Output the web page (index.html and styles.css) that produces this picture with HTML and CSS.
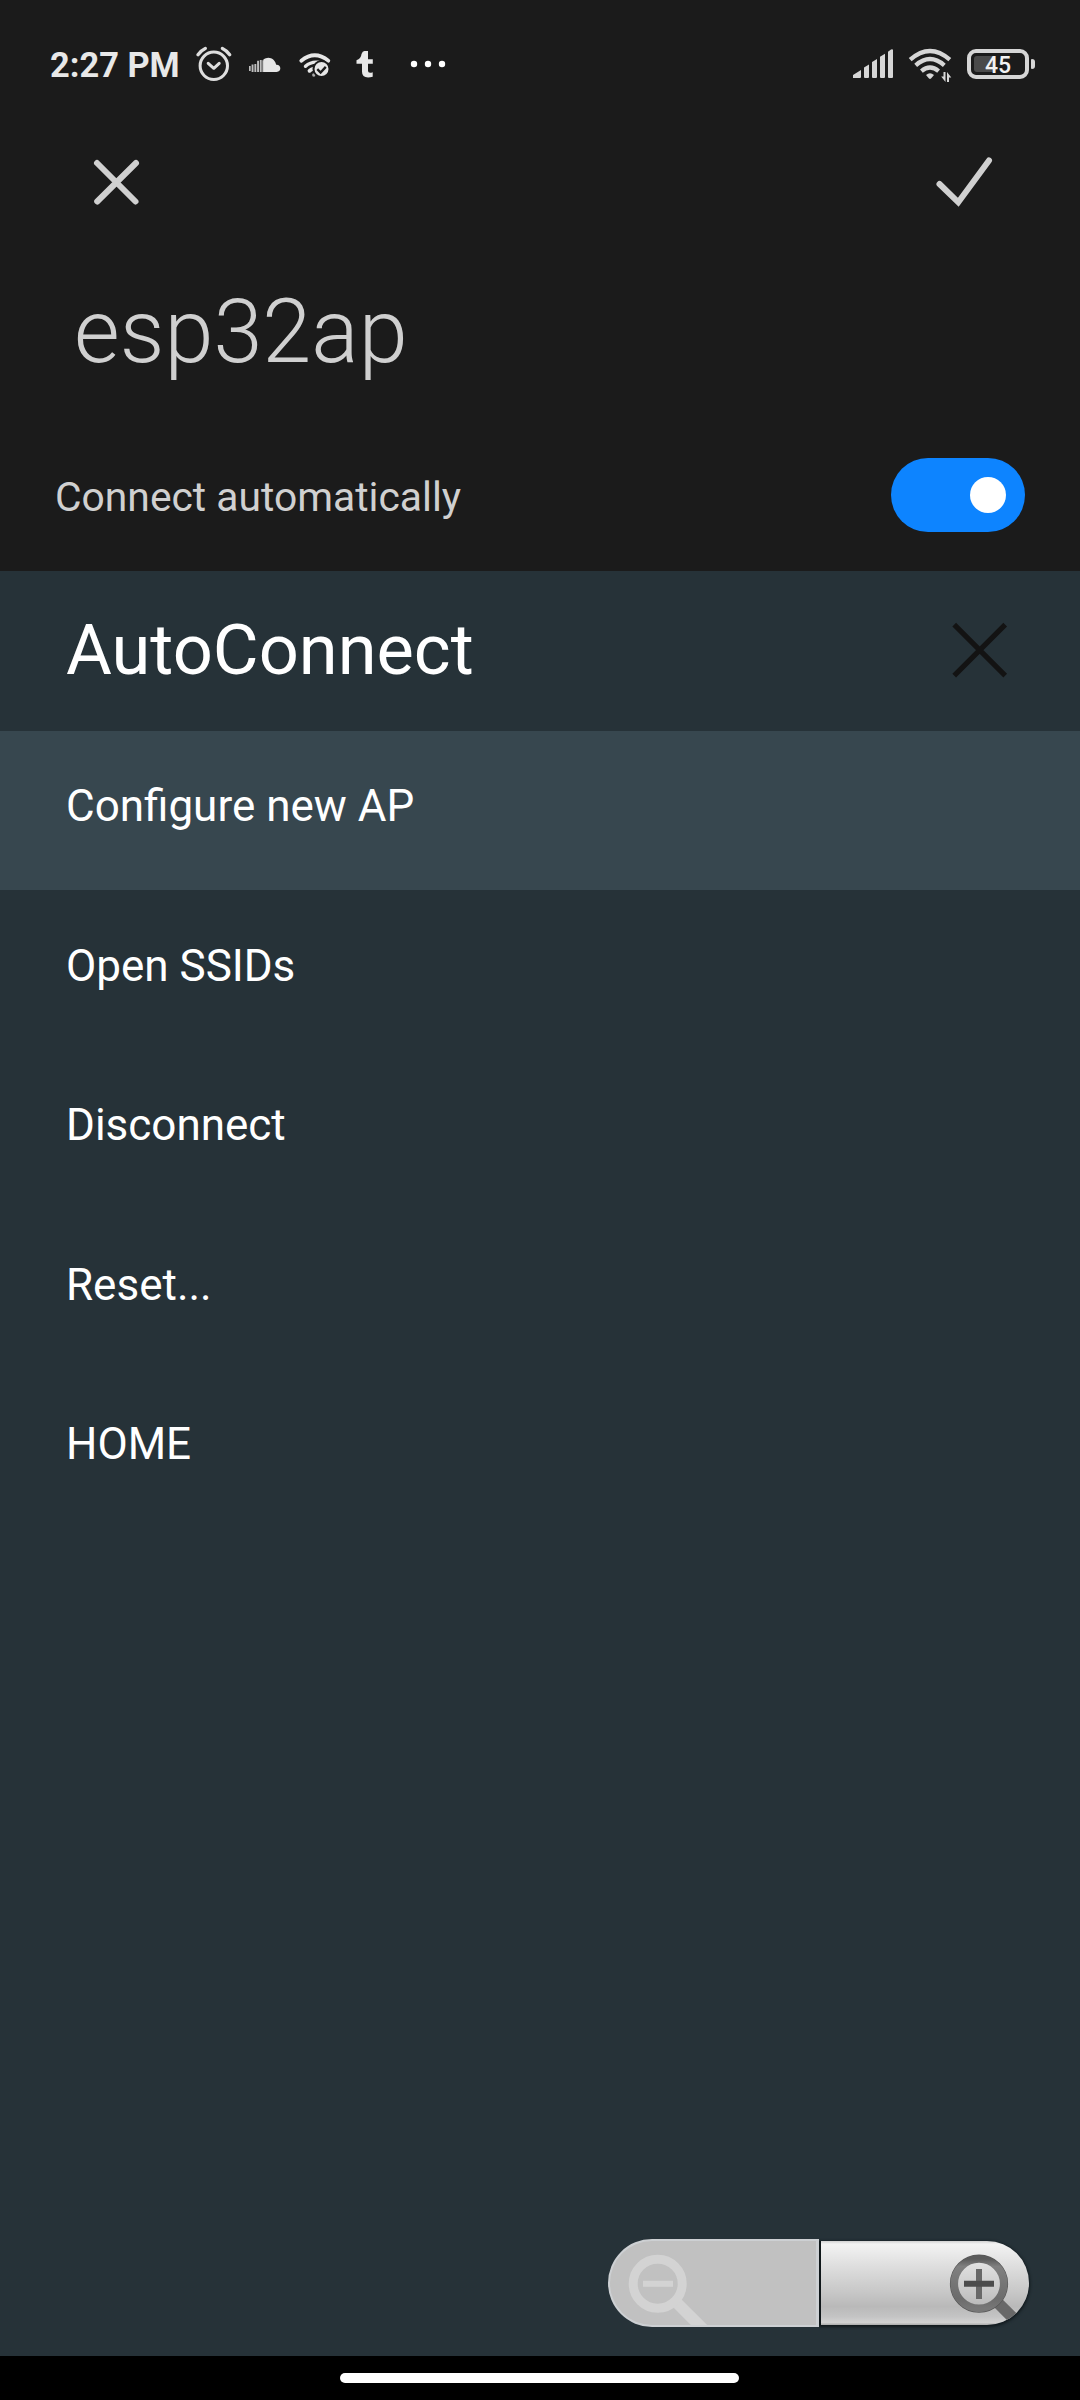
FILE: index.html
```html
<!DOCTYPE html>
<html lang="en">
<head>
<meta charset="utf-8">
<title>esp32ap</title>
<link rel="stylesheet" href="styles.css">
</head>
<body>
<div class="screen">
  <header class="status">
    <span class="clock">2:27 PM</span>
    <svg class="status-left" width="260" height="50" viewBox="190 40 260 50" fill="none" stroke="#dedede" stroke-width="3">
      <!-- alarm -->
      <g stroke-linecap="round" stroke-linejoin="round">
        <circle cx="213.8" cy="65.8" r="13.7"/>
        <path d="M208.2 63.3l5.6 5 5.4-5"/>
        <path d="M198 54.7q3.5-4.5 7.300-6.200M229.700 54.700q-3.500-4.500-7.300-6.200" stroke-width="3.400"/>
      </g>
      <!-- cloud -->
      <g stroke="none" fill="#e6e6e6">
        <path d="M263.500 59.300q3-2 6.200-1.400c3.600.6 6 3.500 6.500 6.900 5-.4 5.900 6.700.4 7.200h-13.100z"/>
        <path d="M249 66h1.700v5H249zM251.600 64.500h1.900V72h-1.900zM254.400 64h1.900v8h-1.900zM257.100 60.700h1.900V72h-1.900zM259.800 60h1.900v12h-1.900zM262.400 60.200h2.200V72h-2.200z" opacity=".8"/>
      </g>
      <!-- wifi verified -->
      <g stroke="#e6e6e6">
        <path d="M301.300 60.800q13.500-11 27 0" stroke-width="3.800" stroke-linecap="round"/>
        <path d="M305.500 66.300q5.500-5 13-4" stroke-width="3.400" stroke-linecap="round"/>
        <path d="M309.500 70.800q1.500-1.500 3.500-2" stroke-width="3.800" stroke-linecap="round"/>
        <circle cx="313.800" cy="75" r="1.700" fill="#aaa" stroke="none"/>
        <circle cx="321.500" cy="69" r="8" fill="#e6e6e6" stroke="#1b1b1b" stroke-width="2"/>
        <path d="M317.300 69.200l3.300 3.300 5.200-5.600" stroke="#1b1b1b" stroke-width="2.400"/>
      </g>
      <!-- blog app -->
      <path d="M361.500 54q1-3 3-3h3.500v8.300h4.800v4.400H368v7q0 3 4.700 1.500v4.600q-10.700 2.400-10.700-5v-8.100h-5.500v-3.400q4.500-1.500 5-6.300z" fill="#e8e8e8" stroke="none"/>
      <g stroke="none" fill="#fff"><circle cx="414" cy="64" r="3.200"/><circle cx="428" cy="64" r="3.200"/><circle cx="442" cy="64" r="3.200"/></g>
    </svg>
    <svg class="status-right" width="110" height="40" viewBox="850 45 110 40" fill="#d6d6d6">
      <path d="M853 78v-3l8-5v7q0 1-1 1zM864 67.500l5-3V77q0 1-1 1h-3q-1 0-1-1zM872 62l5-3v18q0 1-1 1h-3q-1 0-1-1zM880 56.800l5-3V77q0 1-1 1h-3q-1 0-1-1zM888 51.700l3-2.200q2-.8 2 .8V77q0 1-1 1h-3q-1 0-1-1z"/>
      <g fill="none" stroke="#d6d6d6" stroke-width="4.300">
        <path d="M910.200 59.600q19.800-17.400 39.600 0"/>
        <path d="M915.700 65.300q14.300-12.400 28.600 0"/>
        <path d="M921.400 71.200q8.600-7.200 17.200 0"/>
      </g>
      <path d="M926 75q4-3.500 8 0l-3 3.600q-1 .8-2 0z"/>
      <path d="M943.500 72h2v10l-4.300-5.500h2.300zM947 72l4.300 5.500H949V82h-2z"/>
    </svg>
    <div class="battery"><span class="level">45</span></div>
    <span class="nub"></span>
  </header>

  <section class="network">
    <div class="actions">
      <svg width="50" height="50" viewBox="92 158 50 50" fill="none" stroke="#d0d0d0" stroke-width="6" stroke-linecap="round"><path d="M97 163l38.500 38.500M136 163l-38.800 38.500"/></svg>
      <svg width="60" height="54" viewBox="934 154 60 54" fill="none" stroke="#d0d0d0" stroke-width="6" stroke-linecap="round"><path d="M939.500 184l18.800 18.300L989 160.500"/></svg>
    </div>
    <h1 class="ssid">esp32ap</h1>
    <div class="auto">
      <span>Connect automatically</span>
      <div class="toggle"><div class="knob"></div></div>
    </div>
  </section>

  <main class="portal">
    <div class="brand">
      <span>AutoConnect</span>
      <svg width="60" height="60" viewBox="950 620 60 60" stroke="#131313" stroke-width="5.200"><path d="M954.200 624.700l51 51M1005.200 624.700l-51 51"/></svg>
    </div>
    <nav class="menu">
      <a class="item active">Configure new AP</a>
      <a class="item">Open SSIDs</a>
      <a class="item">Disconnect</a>
      <a class="item">Reset...</a>
      <a class="item">HOME</a>
    </nav>
    <div class="zoom">
      <div class="zoom-out">
        <svg width="207" height="84" viewBox="610 2241 207 84" fill="none" stroke="#d3d3d3">
          <path d="M676 2302l30 30" stroke-width="11.500"/>
          <circle cx="657.700" cy="2283.700" r="24.500" stroke-width="9"/>
          <path d="M643 2283.700h30" stroke-width="6"/>
        </svg>
      </div>
      <div class="zoom-in">
        <svg width="208" height="84" viewBox="821 2241 208 84" fill="none">
          <defs><linearGradient id="ring" x1="0" y1="0" x2="0" y2="1"><stop offset="0" stop-color="#5a5a5a"/><stop offset=".15" stop-color="#808080"/><stop offset=".8" stop-color="#6c6c6c"/><stop offset="1" stop-color="#777"/></linearGradient></defs>
          <path d="M996 2301l30 30" stroke="#686868" stroke-width="11.500"/>
          <circle cx="979" cy="2283.700" r="28.300" stroke="#555" stroke-width="1.600"/>
          <circle cx="979" cy="2283.700" r="24.700" stroke="url(#ring)" stroke-width="7.600"/>
          <path d="M979 2269v30" stroke="#686868" stroke-width="6"/>
          <path d="M964 2283.700h30" stroke="#4c4c4c" stroke-width="6"/>
        </svg>
      </div>
    </div>
  </main>
  <footer class="gesture"><div class="pill"></div></footer>
</div>
</body>
</html>
```
FILE: styles.css
```css
* { box-sizing: border-box; }
body {
  margin: 0;
  background: #1b1b1b;
  font-family: Roboto, "Noto Sans", sans-serif;
}
svg { display: block; flex: none; }
.screen {
  width: 1080px;
  height: 2400px;
  display: flex;
  flex-direction: column;
  overflow: hidden;
}
.status {
  height: 130px;
  display: flex;
  align-items: center;
  padding: 0 45px 0 50px;
}
.clock {
  width: 140px;
  font-size: 34.400px;
  font-weight: 700;
  line-height: 40px;
  color: #e8e8e8;
  white-space: nowrap;
}
.status-left { margin-right: auto; }
.status-right { margin-right: 7px; }
.battery {
  width: 62px;
  height: 30px;
  margin-top: -2px;
  border: 4px solid #d6d6d6;
  border-radius: 9px;
  padding: 3px;
}
.level {
  display: block;
  width: 48px;
  height: 16px;
  border-radius: 3px;
  background: linear-gradient(90deg, #4a4a4a 20px, transparent 20px);
  font-size: 23px;
  font-weight: 500;
  line-height: 19px;
  text-align: center;
  color: #f2f2f2;
}
.nub {
  width: 4px;
  height: 10px;
  margin: -2px 0 0 2px;
  border-radius: 1px 3px 3px 1px;
  background: #d6d6d6;
}
.network { height: 441px; color: #d0d0d0; }
.actions {
  display: flex;
  justify-content: space-between;
  align-items: flex-start;
  height: 150px;
  padding: 28px 86px 0 92px;
}
.actions svg:last-child { margin-top: -4px; }
.ssid {
  margin: 0;
  height: 104px;
  padding-left: 74px;
  font-size: 88.300px;
  font-weight: 300;
  line-height: 104px;
}
.auto {
  display: flex;
  align-items: center;
  justify-content: space-between;
  height: 74px;
  margin-top: 74px;
  padding: 0 55px;
  font-size: 40.800px;
  line-height: 48px;
}
.auto span { padding-top: 3px; }
.toggle {
  display: flex;
  align-items: center;
  justify-content: flex-end;
  width: 134px;
  height: 74px;
  padding-right: 19px;
  border-radius: 37px;
  background: #0d84ff;
}
.knob {
  width: 36px;
  height: 36px;
  border-radius: 50%;
  background: #fff;
}
.portal {
  height: 1785px;
  display: flex;
  flex-direction: column;
  background: #263238;
  color: #fff;
}
.brand {
  display: flex;
  align-items: center;
  justify-content: space-between;
  height: 160px;
  padding: 0 70px 2px 66px;
  font-size: 70.400px;
  line-height: 82px;
}
.menu { display: flex; flex-direction: column; }
.item {
  height: 159.500px;
  padding-left: 66px;
  font-size: 44px;
  line-height: 150px;
}
.active {
  height: 159px;
  margin-bottom: 0.500px;
  background: #37474f;
}
.zoom {
  display: flex;
  align-items: center;
  align-self: flex-end;
  margin: auto 51px 29px 0;
}
.zoom-out {
  width: 211px;
  height: 88px;
  border: 2px solid #cdd0d3;
  border-right-width: 3px;
  border-radius: 44px 0 0 44px;
  background: #c1c1c1;
  overflow: hidden;
}
.zoom-in {
  width: 210px;
  height: 84px;
  border-left: 2px solid #10171a;
  border-radius: 0 42px 42px 0;
  background: linear-gradient(#d0d0d0 0, #f3f3f3 3px, #dedede 30%, #c8c8c8 60%, #b9b9b9 78%, #c4c4c4 90%, #d2d2d2 97%, #aaa);
  box-shadow: 0 1px 3px 1px #11191d;
  clip-path: inset(-5px -5px -5px 0);
  overflow: hidden;
}
.gesture {
  height: 44px;
  padding: 17px 0 0 340px;
  background: #000;
}
.pill {
  width: 399px;
  height: 10px;
  border-radius: 5px;
  background: #fff;
}
```
